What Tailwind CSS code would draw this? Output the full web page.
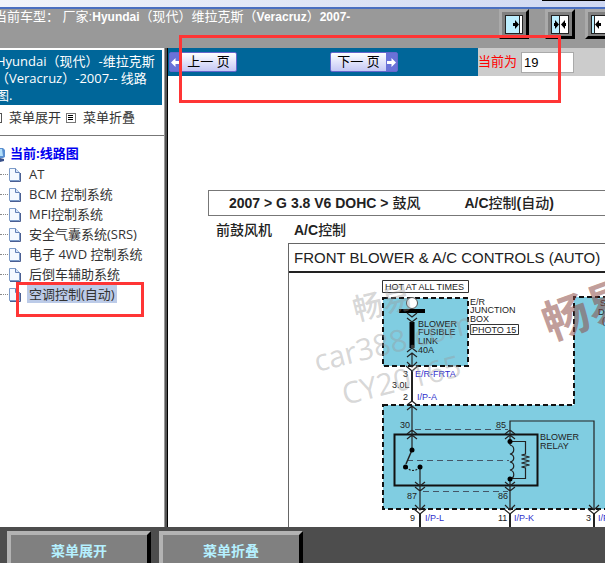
<!DOCTYPE html>
<html lang="zh-CN">
<head>
  <meta charset="UTF-8" />
  <meta name="viewport" content="width=device-width, initial-scale=1.0" />
  <title>线路图</title>
  <script src="https://cdn.jsdelivr.net/npm/@tailwindcss/browser@4"></script>
</head>
<body class="relative flex h-screen flex-col overflow-hidden bg-white font-['Liberation_Sans','Noto_Sans_CJK_SC',sans-serif] text-[13px] text-[#333]">

  <!-- Window edge -->
  <div class="flex h-[9px] shrink-0 justify-end border-b-2 border-[#4a6fc0] bg-linear-to-r from-[#f1f4fa] to-[#cfd8f2]">
    <div class="h-px w-[63px] bg-black"></div>
  </div>

  <header class="flex h-[39px] shrink-0 items-start overflow-hidden bg-[#999]">
    <h1 class="-ml-1.5 w-[505px] shrink-0 whitespace-nowrap leading-4 text-white">当前车型： 厂家:<span class="text-xs font-bold">Hyundai</span>（现代）维拉克斯（<span class="text-xs font-bold">Veracruz</span>）<span class="text-xs font-bold">2007-</span></h1>
    <button type="button" aria-label="向右" class="mr-4 h-[30px] w-[30px] shrink-0 border-3 border-t-[#aaa] border-r-black border-b-black border-l-[#aaa] bg-[#808080] pl-[3px]">
      <svg width="18" height="19" viewBox="0 0 18 19"><rect x=".5" y=".5" width="17" height="18" fill="#bdefff" stroke="#222" /><path d="M15 1h2v17h-2z" fill="#fff" /><path d="M14.5 1v17" stroke="#222" /><path d="M8 8h2V5l4 4.500-4 4.500v-3H8z" fill="#000" /></svg>
    </button>
    <button type="button" aria-label="居中" class="mr-2.5 h-[30px] w-[30px] shrink-0 border-3 border-t-[#aaa] border-r-black border-b-black border-l-[#aaa] bg-[#808080] pl-[3px]">
      <svg width="18" height="19" viewBox="0 0 18 19"><rect x=".5" y=".5" width="17" height="18" fill="#bdefff" stroke="#222" /><path d="M9 1h8v17H9z" fill="#fff" /><path d="M8.500 1v17" stroke="#222" /><path d="M3 8h1V5l4 4.500-4 4.500v-3H3zM15 8h-1V5l-4 4.500 4 4.500v-3h1z" fill="#000" /></svg>
    </button>
    <button type="button" aria-label="向左" class="h-[30px] w-[30px] shrink-0 border-3 border-t-[#aaa] border-r-black border-b-black border-l-[#aaa] bg-[#808080] pl-[3px]">
      <svg width="18" height="19" viewBox="0 0 18 19"><rect x=".5" y=".5" width="17" height="18" fill="#fff" stroke="#222" /><path d="M1 1h2v17H1z" fill="#bdefff" /><path d="M3.500 1v17" stroke="#222" /><path d="M10 8H8V5L4 9.500 8 14v-3h2z" fill="#000" /></svg>
    </button>
  </header>

  <div class="flex min-h-0 flex-1">
    <!-- Menu -->
    <nav class="w-[165px] shrink-0 overflow-hidden border-r border-[#999] pt-0.5 font-['Open_Sans','Noto_Sans_CJK_SC',sans-serif]">
      <h2 class="mr-0.5 bg-[#069] pt-[3px] pb-px leading-[17px] whitespace-nowrap text-white">
        <span class="-ml-1 block">Hyundai（现代）-维拉克斯<br />（Veracruz）-2007-- 线路<br />图.</span>
      </h2>
      <div class="-ml-2 flex h-[31px] items-center border-b border-[#777] pb-1">
        <button type="button" class="mr-[5px] flex items-center gap-[7px]">
          <svg width="10" height="10" viewBox="0 0 10 10"><rect x=".5" y=".5" width="9" height="9" fill="#fff" stroke="#555" /></svg>
          菜单展开
        </button>
        <button type="button" class="flex items-center gap-[7px]">
          <svg width="10" height="10" viewBox="0 0 10 10"><rect x=".5" y=".5" width="9" height="9" fill="#fff" stroke="#777" /><path d="M2 2.500h5M2 4.500h5M2 6.500h5" stroke="#000" /></svg>
          菜单折叠
        </button>
      </div>
      <a href="#" class="mt-2 flex h-5 items-center gap-[5px] font-bold text-[#0000f0]">
        <svg class="shrink-0" width="5" height="18" viewBox="0 0 5 18"><path d="M0 3h3l2 2v7l-2 1H0z" fill="#5a8fd0" /><path d="M0 4h2l1 7H0z" fill="#b5e0fa" /><path d="M0 13l4 1v2l-4 1z" fill="#38508a" /></svg>
        当前:线路图
      </a>
      <svg class="hidden">
        <symbol id="doc" viewBox="0 0 13 15"><path d="M1.500 1.500h6l4 4v8h-10z" fill="#f4f9ff" stroke="#7d9cc9" /><path d="M7.500 1.500v4h4" fill="#d5e5fa" stroke="#6380b5" /><path d="M2 14.500h10.500V6" fill="none" stroke="#4b5f92" /></symbol>
      </svg>
      <ul class="leading-5 whitespace-nowrap">
        <li class="flex h-5 items-center"><span class="w-2 border-t border-dotted border-[#888]"></span><svg class="mr-[6px] h-[15px] w-[13px]"><use href="#doc" /></svg><a href="#" class="px-0.5">AT</a></li>
        <li class="flex h-5 items-center"><span class="w-2 border-t border-dotted border-[#888]"></span><svg class="mr-[6px] h-[15px] w-[13px]"><use href="#doc" /></svg><a href="#" class="px-0.5">BCM 控制系统</a></li>
        <li class="flex h-5 items-center"><span class="w-2 border-t border-dotted border-[#888]"></span><svg class="mr-[6px] h-[15px] w-[13px]"><use href="#doc" /></svg><a href="#" class="px-0.5">MFI控制系统</a></li>
        <li class="flex h-5 items-center"><span class="w-2 border-t border-dotted border-[#888]"></span><svg class="mr-[6px] h-[15px] w-[13px]"><use href="#doc" /></svg><a href="#" class="px-0.5">安全气囊系统(SRS)</a></li>
        <li class="flex h-5 items-center"><span class="w-2 border-t border-dotted border-[#888]"></span><svg class="mr-[6px] h-[15px] w-[13px]"><use href="#doc" /></svg><a href="#" class="px-0.5">电子 4WD 控制系统</a></li>
        <li class="flex h-5 items-center"><span class="w-2 border-t border-dotted border-[#888]"></span><svg class="mr-[6px] h-[15px] w-[13px]"><use href="#doc" /></svg><a href="#" class="px-0.5">后倒车辅助系统</a></li>
        <li class="flex h-5 items-center"><span class="w-2 border-t border-dotted border-[#888]"></span><svg class="mr-[6px] h-[15px] w-[13px]"><use href="#doc" /></svg><a href="#" class="bg-[#bccbe8] px-0.5 leading-[18px]">空调控制(自动)</a></li>
      </ul>
    </nav>
    <div class="w-[3px] shrink-0 border-r border-black bg-[#555]"></div>

    <!-- Diagram pane -->
    <main class="flex min-w-0 flex-1 flex-col overflow-hidden">
      <div class="flex h-7 shrink-0 bg-[#ccc]">
        <div class="flex w-[310px] shrink-0 items-center gap-[93px] bg-[#069] pl-px">
          <button type="button" class="flex h-5 w-[68px] items-center rounded-xs border border-[#66c] bg-linear-to-b from-white to-[#c5c8f5] text-black">
            <span class="flex h-full w-[11px] items-center justify-center bg-[#6a72d8]"><svg width="9" height="9" viewBox="0 0 9 9"><path d="M0 4.500L4.500 0v3H9v3H4.500v3z" fill="#fff" /></svg></span>
            <span class="flex-1 text-center">上一 页</span>
          </button>
          <button type="button" class="flex h-5 w-[68px] items-center rounded-xs border border-[#66c] bg-linear-to-b from-white to-[#c5c8f5] text-black">
            <span class="flex-1 text-center">下一 页</span>
            <span class="flex h-full w-[11px] items-center justify-center bg-[#6a72d8]"><svg width="9" height="9" viewBox="0 0 9 9"><path d="M9 4.500L4.500 0v3H0v3h4.500v3z" fill="#fff" /></svg></span>
          </button>
        </div>
        <div class="flex items-center gap-1">
          <label for="page" class="whitespace-nowrap text-[#f00]">当前为</label>
          <input id="page" type="text" value="19" class="h-[21px] w-[53px] border border-[#aaa] bg-white px-0.5 text-[13px] text-black" />
        </div>
      </div>

      <div class="mt-[114px] ml-10 w-[520px] text-sm font-bold text-[#222]">
        <div class="flex h-[26px] items-center gap-11 border border-[#777] pl-5 whitespace-nowrap">
          <span>2007 &gt; G 3.8 V6 DOHC &gt; <span class="font-medium">鼓风</span></span>
          <span>A/C<span class="font-medium">控制</span>(<span class="font-medium">自动</span>)</span>
        </div>
        <div class="flex h-[27px] items-center gap-[22px] pl-2">
          <span class="font-medium">前鼓风机</span>
          <span>A/C<span class="font-medium">控制</span></span>
        </div>
      </div>
      <section class="ml-[120px] w-[440px] shrink-0 border border-[#666]">
        <h3 class="h-[29px] border-b-2 border-[#222] pl-[5px] text-[15px] leading-7 whitespace-nowrap text-[#222]">FRONT BLOWER &amp; A/C CONTROLS (AUTO)</h3>
        <svg class="block" width="438" height="300" viewBox="289 273 438 300" font-family="Liberation Sans, Noto Sans CJK SC, sans-serif" font-size="9" fill="#222">
          <!-- Junction boxes -->
          <g fill="#80cde1" stroke="#111" stroke-width="2" stroke-dasharray="5 3">
            <path d="M383 298h85v68h-85z" />
            <path d="M383 405h191V297h150v212H383z" />
          </g>
          <g fill="none" stroke="#333">
            <path d="M382.500 280.500h86v12h-86z" />
            <path d="M470.500 324.500h48v10h-48z" />
            <path d="M394.500 434.500h143v51h-143z" stroke="#111" stroke-width="2" />
            <path d="M415 429.500h93M407 460.500h102M423 491.500h85" stroke="#456" stroke-dasharray="6 4" />
          </g>

          <!-- Fuse, switch and relay coil -->
          <circle cx="412" cy="303" r="5.5" fill="#fff" stroke="#555" />
          <path d="M399 309h26v4h-26zM409.500 322h5v26h-5z" fill="#000" />
          <g fill="none" stroke="#222" stroke-width="1.200">
            <path d="M407 313l5 4 5-4M407 318l5 4 5-4M407 352l5-4 5 4M407 357l5-4 5 4M412 353v14M407 362l5 5 5-5M406 366l6 5 6-5" />
            <path d="M407 405l5-4 5 4M407 410l5-4 5 4M412 406v44M407 434l5-4 5 4M407 439l5-4 5 4" />
            <path d="M420 467v42M415 482l5 4 5-4M415 487l5 4 5-4M415 505l5 5 5-5M414 509l6 5 6-5" />
            <path d="M510 434V421h84v88M505 434l5-4 5 4M505 439l5-4 5 4M510 430v15M505 482l5 4 5-4M505 487l5 4 5-4M510 479v30M505 505l5 5 5-5M504 509l6 5 6-5M589 505l5 5 5-5M588 509l6 5 6-5" />
            <path d="M510 445c5 1 5 8 0 9c5 1 5 7 0 8c5 1 5 7 0 8c5 1 5 8 0 9" />
            <path d="M510 441.500h15.500V454l-4 1 8 2-8 2 8 2-8 2 8 2-8 2 4 1v10.500H510" />
            <path d="M412 450l-6 14" stroke-width="1.500" />
            <path d="M406 467q7 7 14 0" stroke-dasharray="2 1.500" />
            <path d="M412 371v30M420 514v60M510 514v60M594 514v60" stroke-width="2" />
          </g>
          <g fill="#000"><circle cx="412" cy="450" r="2.5" /><circle cx="405.500" cy="467" r="2.500" /><circle cx="420" cy="467" r="2.500" /><circle cx="510" cy="441.500" r="2.500" /><circle cx="510" cy="479" r="2.500" /></g>

          <text x="385" y="290">HOT AT ALL TIMES</text>
          <text x="418" y="327">BLOWER</text><text x="418" y="335">FUSIBLE</text><text x="418" y="344">LINK</text><text x="418" y="353">40A</text>
          <text x="470" y="305">E/R</text><text x="470" y="313">JUNCTION</text><text x="470" y="322">BOX</text><text x="472" y="333">PHOTO 15</text>
          <text x="403" y="377">3</text><text x="392" y="388">3.0L</text><text x="403" y="400">2</text>
          <text x="400" y="428">30</text><text x="407" y="499">87</text><text x="496" y="428">85</text><text x="498" y="499">86</text>
          <text x="540" y="440">BLOWER</text><text x="540" y="449">RELAY</text>
          <text x="410" y="521">9</text><text x="498" y="521">11</text><text x="586" y="521">3</text>
          <text x="600" y="306">S</text><text x="598" y="315">D</text><text x="602" y="324">(</text>
          <g fill="#3030cc"><text x="415" y="377">E/R-FRTA</text><text x="417" y="400">I/P-A</text><text x="425" y="521">I/P-L</text><text x="514" y="521">I/P-K</text><text x="598" y="521">I/P-J</text></g>

          <!-- Watermarks -->
          <g fill="#999" fill-opacity=".4" font-family="Open Sans, Noto Sans CJK SC, sans-serif" font-size="30">
            <text transform="translate(356 321) rotate(-14)" font-weight="500">畅易</text>
            <text transform="translate(317 372) rotate(-14)">car388.com</text>
            <text transform="translate(345 405) rotate(-14)">CY20165</text>
          </g>
          <text transform="translate(550 341) rotate(-20)" font-size="46" font-weight="700" fill="#8c4a44" fill-opacity=".55">畅易</text>
        </svg>
      </section>
    </main>
  </div>

  <footer class="flex h-9 shrink-0 gap-2 overflow-hidden bg-[#4d4d4d] pt-1 pl-[7px]">
    <button type="button" class="h-12 w-36 shrink-0 border-4 border-t-[#b3b3b3] border-r-black border-b-black border-l-[#b3b3b3] bg-[#808080] pb-2 text-sm font-bold text-[#b5f0ff]">菜单展开</button>
    <button type="button" class="h-12 w-36 shrink-0 border-4 border-t-[#b3b3b3] border-r-black border-b-black border-l-[#b3b3b3] bg-[#808080] pb-2 text-sm font-bold text-[#b5f0ff]">菜单折叠</button>
  </footer>

  <!-- Callouts -->
  <div class="pointer-events-none absolute top-[35px] left-[179px] h-[68px] w-[382px] border-3 border-[#ff3535]"></div>
  <div class="pointer-events-none absolute top-[282px] left-4 h-[35px] w-32 border-3 border-[#ff3535]"></div>
</body>
</html>
